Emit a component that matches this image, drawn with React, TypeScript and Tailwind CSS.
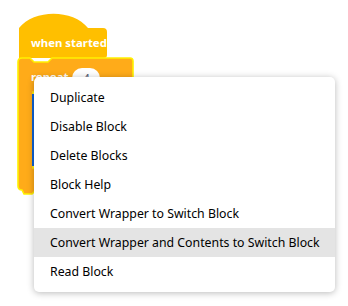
const items = [
  "Duplicate",
  "Disable Block",
  "Delete Blocks",
  "Block Help",
  "Convert Wrapper to Switch Block",
  "Convert Wrapper and Contents to Switch Block",
  "Read Block",
];

const activeItem = "Convert Wrapper and Contents to Switch Block";

function Blocks() {
  return (
    <svg width="348" height="306" viewBox="0 0 348 306" className="block">
      {/* hat block */}
      <path
        d="M19 28 C 34 9, 73 9, 88 28 L103 28 Q107 28 107 32 L107 55 Q107 58 104 58 L19 58 Z"
        fill="#ffbf00"
      />
      <text x="31" y="47" fill="#fff" fontSize="11.4" fontWeight="700" fontFamily="'Noto Sans', sans-serif">
        when started
      </text>
      {/* repeat C block, selected */}
      <path
        d="M22 58 L30 58 L34 62 L48 62 L52 58 L130 58 Q133 58 133 61 L133 92 L33 92 L33 168 L133 168 L133 190 L36 190 L32 194 L24 194 L22 190 Q18 190 18 186 L18 62 Q18 58 22 58 Z"
        fill="#ffab19"
        stroke="#fff200"
        strokeWidth="1.6"
      />
      <text x="31" y="81" fill="#fff" fontSize="11.4" fontWeight="700" fontFamily="'Noto Sans', sans-serif">
        repeat
      </text>
      <rect x="72" y="68" width="28" height="20" rx="10" fill="#fff" />
      <text x="83" y="83" fill="#575e75" fontSize="12" fontFamily="'Noto Sans', sans-serif">
        4
      </text>
      <rect x="32" y="94" width="2" height="72" fill="#0f62d6" />
    </svg>
  );
}

export default function App() {
  return (
    <div className="relative h-[306px] w-[348px] overflow-hidden bg-white">
      <Blocks />
      {/* context menu */}
      <div className="absolute left-[34px] top-[77px] w-[301px] rounded-[5px] bg-white py-[6px] font-['Noto_Sans',sans-serif] shadow-[0_1px_7px_rgba(0,0,0,0.28)]">
        {items.map((item) => (
          <div
            key={item}
            className={
              item === activeItem
                ? "h-[29px] bg-[#e4e4e4] pl-4 text-[12.3px] leading-[29px] text-black"
                : "h-[29px] pl-4 text-[12.3px] leading-[29px] text-black"
            }
          >
            {item}
          </div>
        ))}
      </div>
    </div>
  );
}
